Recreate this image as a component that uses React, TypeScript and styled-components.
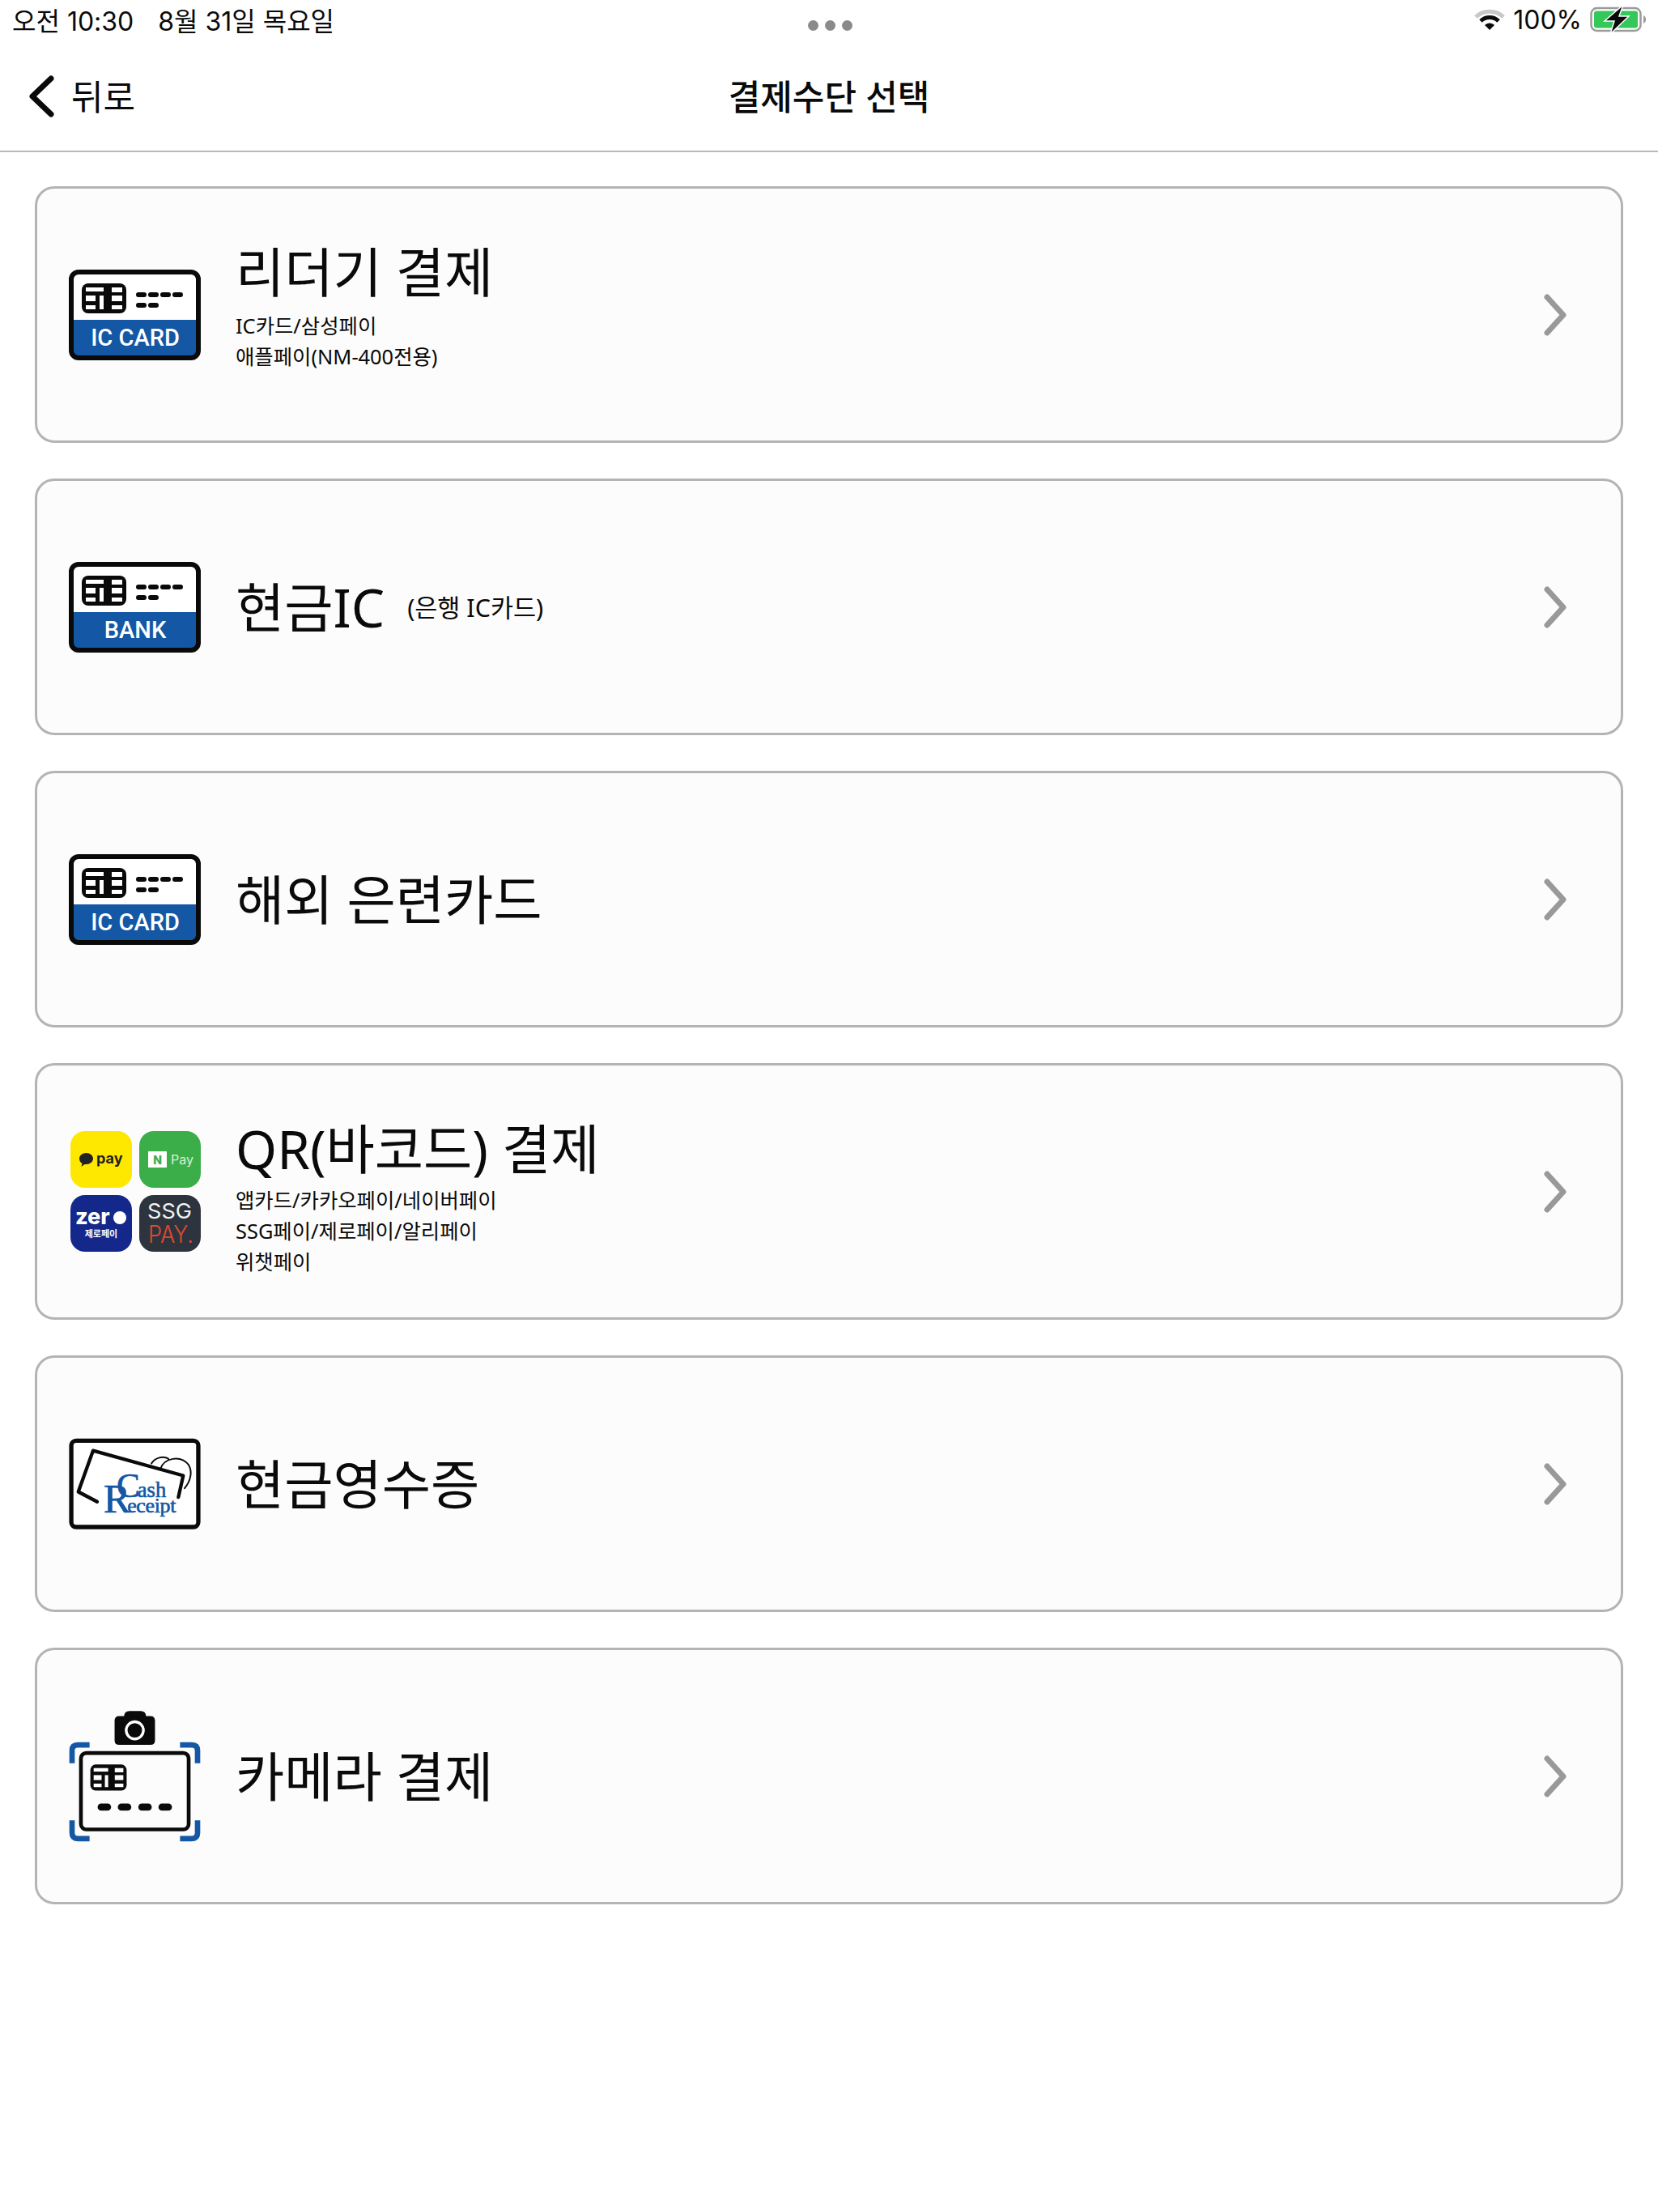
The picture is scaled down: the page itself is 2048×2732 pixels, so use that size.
import React from "react";
import styled, { createGlobalStyle } from "styled-components";

const GlobalStyle = createGlobalStyle`
  html, body {
    margin: 0;
    padding: 0;
    background: #fff;
  }
  * {
    box-sizing: border-box;
  }
`;

const FONT = `"Noto Sans", "Noto Sans CJK KR", sans-serif`;
const BLUE = "#1457a5";

const Page = styled.div`
  width: 2048px;
  min-height: 2732px;
  background: #fff;
  color: #0a0a0a;
  font-family: ${FONT};
`;

const StatusBar = styled.div`
  display: grid;
  grid-template-columns: 1fr auto 1fr;
  align-items: center;
  height: 54px;
  padding: 0 12px 6px 15px;
  font-family: Inter, "Noto Sans CJK KR", sans-serif;
  font-size: 32px;
`;

const StatusLeft = styled.div`
  display: flex;
  gap: 30px;
  white-space: nowrap;
`;

const Dots = styled.div`
  display: flex;
  gap: 8px;
  margin-top: 14px;
`;

const Dot = styled.span`
  width: 13px;
  height: 13px;
  border-radius: 50%;
  background: #8a8a8a;
`;

const StatusRight = styled.div`
  display: flex;
  justify-content: flex-end;
  align-items: center;
  gap: 10px;
`;

const NavBar = styled.header`
  display: grid;
  grid-template-columns: 1fr auto 1fr;
  align-items: center;
  height: 134px;
  padding: 0 36px 6px;
  border-bottom: 2px solid #b9b9b9;
`;

const BackButton = styled.div`
  display: flex;
  align-items: center;
  gap: 21px;
  font-size: 43px;
`;

const NavTitle = styled.h1`
  margin: 0;
  font-size: 43px;
  font-weight: 500;
`;

const List = styled.main`
  display: flex;
  flex-direction: column;
  gap: 44px;
  padding: 42px 43px 0;
`;

const Card = styled.section`
  display: flex;
  align-items: center;
  height: 317px;
  padding: 0 67px 0 39px;
  background: #fcfcfc;
  border: 3px solid #b4b4b4;
  border-radius: 24px;
`;

const IconSlot = styled.div`
  display: flex;
  flex: 0 0 163px;
  justify-content: center;
  margin-right: 43px;
`;

const TextBlock = styled.div<{ $top: boolean }>`
  display: flex;
  flex: 1;
  flex-direction: column;
  align-self: ${(p) => (p.$top ? "flex-start" : "center")};
  margin-top: ${(p) => (p.$top ? "59px" : "0")};
`;

const TitleRow = styled.div`
  display: flex;
  align-items: center;
  gap: 28px;
`;

const Title = styled.h2`
  margin: 0;
  font-size: 65.5px;
  font-weight: 400;
  line-height: 88px;
`;

const TitleNote = styled.span`
  margin-top: -2px;
  font-size: 30.5px;
`;

const SubList = styled.div<{ $short: boolean }>`
  margin-top: ${(p) => (p.$short ? "3px" : "0")};
`;

const SubLine = styled.div`
  font-size: 25.4px;
  line-height: 38px;
`;

const ChevronBox = styled.div`
  display: flex;
  flex: none;
`;

const ChipCells: React.FC = () => (
  <>
    <rect width="55" height="37" rx="8" fill="#0a0a0a" />
    <g fill="#fff">
      <rect x="5" y="5" width="22" height="5" />
      <rect x="5" y="15" width="12" height="7" />
      <rect x="5" y="27" width="12" height="5" />
      <rect x="22" y="15" width="5" height="17" />
      <rect x="37" y="5" width="13" height="6" />
      <rect x="37" y="15" width="13" height="7" />
      <rect x="37" y="27" width="13" height="5" />
    </g>
  </>
);

const CardIcon: React.FC<{ label: string }> = ({ label }) => (
  <svg width="163" height="112" viewBox="0 0 163 112">
    <rect x="3" y="3" width="157" height="106" rx="9" fill="#fff" />
    <path d="M3 62H160V100a9 9 0 0 1-9 9H12a9 9 0 0 1-9-9Z" fill={BLUE} />
    <rect x="3" y="3" width="157" height="106" rx="9" fill="none" stroke="#0a0a0a" strokeWidth="6" />
    <g transform="translate(16 17)">
      <ChipCells />
    </g>
    <g stroke="#0a0a0a" strokeWidth="6" strokeLinecap="round">
      <path d="M86 31h7M101 31h7M116 31h7M131 31h7" />
      <path d="M86 44h7M101 44h7" />
    </g>
    <text x="82" y="94" textAnchor="middle" fill="#fff" fontFamily="Roboto, sans-serif" fontWeight="500" fontSize="29">
      {label}
    </text>
  </svg>
);

const PayTilesIcon: React.FC = () => (
  <svg width="163" height="153" viewBox="0 0 163 153">
    <rect x="2" y="2" width="76" height="70" rx="18" fill="#ffe800" />
    <path d="M13 36c0-4 4-7 8.500-7s8.500 3 8.500 7-4 7-8.500 7l-2 0-4 3 1-4c-2-1-3.500-3-3.500-6Z" fill="#222" />
    <text x="34" y="42" fill="#222" fontFamily="Inter, sans-serif" fontWeight="700" fontSize="18">pay</text>
    <rect x="87" y="2" width="76" height="70" rx="18" fill="#3bae49" />
    <rect x="98" y="27" width="23" height="20" fill="#fff" />
    <text x="109.500" y="43" textAnchor="middle" fill="#3bae49" fontFamily="Inter, sans-serif" fontWeight="800" fontSize="14">N</text>
    <text x="126" y="43" fill="#d8f0da" fontFamily="Inter, sans-serif" fontSize="16">Pay</text>
    <rect x="2" y="81" width="76" height="70" rx="18" fill="#14288c" />
    <text x="8" y="117" fill="#fff" fontFamily="Inter, sans-serif" fontWeight="800" fontSize="27">zer</text>
    <circle cx="63" cy="109" r="8" fill="#fff" />
    <text x="40" y="133" textAnchor="middle" fill="#fff" fontFamily="'Noto Sans CJK KR', sans-serif" fontWeight="700" fontSize="11">제로페이</text>
    <rect x="87" y="81" width="76" height="70" rx="18" fill="#2d343e" />
    <text x="97" y="110" textLength="55" lengthAdjust="spacingAndGlyphs" fill="#f2f2f2" fontFamily="Inter, sans-serif" fontSize="26">SSG</text>
    <text x="98" y="140" textLength="56" lengthAdjust="spacingAndGlyphs" fill="#e2492f" fontFamily="Inter, sans-serif" fontWeight="300" fontSize="30">PAY.</text>
  </svg>
);

const CashReceiptIcon: React.FC = () => (
  <svg width="163" height="113" viewBox="75 45 490 340">
    <rect x="84" y="55" width="472" height="321" rx="18" fill="#fff" stroke="#0a0a0a" strokeWidth="16" />
    <path
      d="M180 282L110 245L165 92L500 185L482 265"
      fill="none"
      stroke="#0a0a0a"
      strokeWidth="13"
      strokeLinecap="round"
      strokeLinejoin="round"
    />
    <path
      d="M382 140C395 118 425 110 445 122M415 160C430 118 490 108 520 145C535 170 528 205 505 232"
      fill="none"
      stroke="#0a0a0a"
      strokeWidth="6"
      strokeLinecap="round"
    />
    <text fill={BLUE} stroke={BLUE} strokeWidth="2" fontFamily="'Liberation Serif', serif">
      <tspan x="252" y="265" fontSize="130">C</tspan>
      <tspan x="330" y="265" fontSize="80">ash</tspan>
      <tspan x="204" y="322" fontSize="150">R</tspan>
      <tspan x="292" y="322" fontSize="78" letterSpacing="-1">eceipt</tspan>
    </text>
  </svg>
);

const CameraCardIcon: React.FC = () => (
  <svg width="163" height="165" viewBox="75 60 490 495">
    <path
      d="M262 85H280Q282 66 300 66H342Q360 66 362 85H378Q395 85 395 102V176Q395 192 378 192H262Q245 192 245 176V102Q245 85 262 85Z"
      fill="#0a0a0a"
    />
    <circle cx="320" cy="138" r="32" fill="#0a0a0a" stroke="#fff" strokeWidth="10" />
    <g fill="none" stroke={BLUE} strokeWidth="20">
      <path d="M152 192H108Q87 192 87 213V260" />
      <path d="M488 192H532Q553 192 553 213V260" />
      <path d="M87 472V519Q87 540 108 540H152" />
      <path d="M553 472V519Q553 540 532 540H488" />
    </g>
    <rect x="120" y="222" width="400" height="284" rx="20" fill="none" stroke="#0a0a0a" strokeWidth="14" />
    <g transform="translate(155 265) scale(2.45 2.62)">
      <ChipCells />
    </g>
    <g fill="#0a0a0a">
      <rect x="182" y="410" width="50" height="26" rx="13" />
      <rect x="257" y="410" width="50" height="26" rx="13" />
      <rect x="333" y="410" width="50" height="26" rx="13" />
      <rect x="408" y="410" width="50" height="26" rx="13" />
    </g>
  </svg>
);

const WifiIcon: React.FC = () => (
  <svg width="38" height="27" viewBox="0 0 38 27">
    <path d="M2 10C11 1 27 1 36 10" fill="none" stroke="#c8c8c8" strokeWidth="5" />
    <path d="M8 15C14 9 24 9 30 15" fill="none" stroke="#0a0a0a" strokeWidth="5" />
    <path d="M13 20C16.500 16.500 21.500 16.500 25 20L19 26Z" fill="#0a0a0a" />
  </svg>
);

const BatteryIcon: React.FC = () => (
  <svg width="72" height="36" viewBox="0 0 72 36">
    <rect x="1.500" y="4" width="61" height="28" rx="7" fill="none" stroke="#9b9b9b" strokeWidth="2.500" />
    <rect x="5" y="7.500" width="54" height="21" rx="3" fill="#34c759" />
    <path d="M66 13C68.500 14 69 16 69 18S68.500 22 66 23Z" fill="#9b9b9b" />
    <path d="M41 0L18 20H30L25 36L48 14H36Z" fill="#0a0a0a" stroke="#fff" strokeWidth="1.500" />
  </svg>
);

const Chevron: React.FC = () => (
  <svg width="28" height="52" viewBox="0 0 28 52">
    <path d="M4 4L24 26L4 48" fill="none" stroke="#999" strokeWidth="7" strokeLinecap="round" strokeLinejoin="round" />
  </svg>
);

const BackChevron: React.FC = () => (
  <svg width="31" height="56" viewBox="0 0 31 56">
    <path d="M27 8L4 30L27 52" fill="none" stroke="#0a0a0a" strokeWidth="7" strokeLinecap="round" strokeLinejoin="round" />
  </svg>
);

const methods: {
  icon: React.ReactNode;
  title: string;
  note?: string;
  lines?: string[];
}[] = [
  {
    icon: <CardIcon label="IC CARD" />,
    title: "리더기 결제",
    lines: ["IC카드/삼성페이", "애플페이(NM-400전용)"],
  },
  { icon: <CardIcon label="BANK" />, title: "현금IC", note: "(은행 IC카드)" },
  { icon: <CardIcon label="IC CARD" />, title: "해외 은련카드" },
  {
    icon: <PayTilesIcon />,
    title: "QR(바코드) 결제",
    lines: ["앱카드/카카오페이/네이버페이", "SSG페이/제로페이/알리페이", "위챗페이"],
  },
  { icon: <CashReceiptIcon />, title: "현금영수증" },
  { icon: <CameraCardIcon />, title: "카메라 결제" },
];

const App: React.FC = () => {
  return (
    <Page>
      <GlobalStyle />
      <StatusBar>
        <StatusLeft>
          <span>오전 10:30</span>
          <span>8월 31일 목요일</span>
        </StatusLeft>
        <Dots>
          <Dot />
          <Dot />
          <Dot />
        </Dots>
        <StatusRight>
          <WifiIcon />
          <span>100%</span>
          <BatteryIcon />
        </StatusRight>
      </StatusBar>
      <NavBar>
        <BackButton>
          <BackChevron />
          뒤로
        </BackButton>
        <NavTitle>결제수단 선택</NavTitle>
      </NavBar>
      <List>
        {methods.map((m) => (
          <Card key={m.title}>
            <IconSlot>{m.icon}</IconSlot>
            <TextBlock $top={Boolean(m.lines)}>
              <TitleRow>
                <Title>{m.title}</Title>
                {m.note && <TitleNote>{m.note}</TitleNote>}
              </TitleRow>
              {m.lines && (
                <SubList $short={m.lines.length === 2}>
                  {m.lines.map((line) => (
                    <SubLine key={line}>{line}</SubLine>
                  ))}
                </SubList>
              )}
            </TextBlock>
            <ChevronBox>
              <Chevron />
            </ChevronBox>
          </Card>
        ))}
      </List>
    </Page>
  );
};

export default App;
